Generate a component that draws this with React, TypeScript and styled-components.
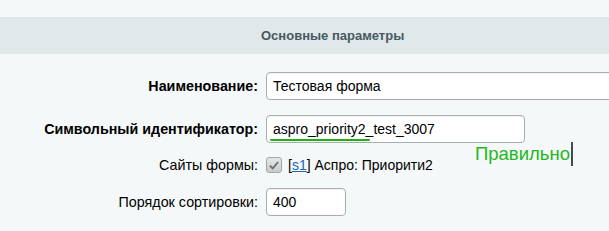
import React from 'react';
import styled, { createGlobalStyle } from 'styled-components';

const GlobalStyle = createGlobalStyle`
  html, body {
    margin: 0;
    padding: 0;
    background: #f5f8f9;
    overflow: hidden;
  }
  body {
    font-family: 'Liberation Sans', Arial, sans-serif;
    font-size: 14px;
    color: #000;
  }
`;

const Page = styled.div`
  width: 609px;
  height: 231px;
  padding-top: 17px;
  box-sizing: border-box;
  overflow: hidden;
`;

const Heading = styled.div`
  height: 37px;
  background: #e0e8ea;
  display: flex;
  align-items: center;
  padding-left: 261px;
`;

const HeadingTitle = styled.h2`
  margin: 0;
  font-size: 13px;
  font-weight: 700;
  color: #465a60;
`;

const Form = styled.div`
  display: flex;
  flex-direction: column;
`;

const Row = styled.div<{ $top: number; $height: number }>`
  display: grid;
  grid-template-columns: 258px 1fr;
  column-gap: 8px;
  align-items: center;
  margin-top: ${(p) => p.$top}px;
  height: ${(p) => p.$height}px;
`;

const Label = styled.label<{ $bold?: boolean }>`
  text-align: right;
  font-size: 14.3px;
  font-weight: ${(p) => (p.$bold ? 700 : 400)};
  white-space: nowrap;
`;

const Field = styled.div<{ $clip?: boolean }>`
  position: relative;
  display: flex;
  align-items: center;
  gap: 6px;
  height: 100%;
  min-width: 0;
  overflow: ${(p) => (p.$clip ? 'hidden' : 'visible')};
`;

const TextInput = styled.input<{ $width: number }>`
  box-sizing: border-box;
  flex: none;
  width: ${(p) => p.$width}px;
  height: 28px;
  padding: 0 6px;
  border: 1px solid #a7aeb1;
  border-radius: 4px;
  background: #fff;
  font-family: 'Liberation Sans', Arial, sans-serif;
  font-size: 14px;
  color: #000;
  outline: none;
  box-shadow: inset 0 1px 1px rgba(0, 0, 0, 0.05);
`;

const Underline = styled.span`
  position: absolute;
  left: 4px;
  top: 24px;
  width: 100px;
  height: 2px;
  border-radius: 1px;
  background: #1eb20f;
`;

const Hint = styled.span`
  position: absolute;
  left: 209px;
  top: 27px;
  height: 24px;
  display: flex;
  align-items: center;
  font-size: 18.5px;
  color: #22b81c;
  &::after {
    content: '';
    display: block;
    width: 2px;
    height: 24px;
    margin-left: 1px;
    background: #4a4a4a;
  }
`;

const Checkbox = styled.span`
  box-sizing: border-box;
  flex: none;
  width: 16px;
  height: 16px;
  border: 1px solid #a3a8aa;
  border-radius: 3px;
  background: linear-gradient(#e4e6e7, #c8cbcc);
  display: flex;
  align-items: center;
  justify-content: center;
`;

const SiteLink = styled.a`
  color: #2067b0;
  text-decoration: underline;
`;

export default function App() {
  return (
    <Page>
      <GlobalStyle />
      <Heading>
        <HeadingTitle>Основные параметры</HeadingTitle>
      </Heading>
      <Form>
        <Row $top={18} $height={28}>
          <Label $bold>Наименование:</Label>
          <Field $clip>
            <TextInput $width={400} defaultValue="Тестовая форма" />
          </Field>
        </Row>
        <Row $top={15} $height={28}>
          <Label $bold>Символьный идентификатор:</Label>
          <Field>
            <TextInput $width={259} defaultValue="aspro_priority2_test_3007" />
            <Underline />
            <Hint>Правильно</Hint>
          </Field>
        </Row>
        <Row $top={14} $height={16}>
          <Label>Сайты формы:</Label>
          <Field>
            <Checkbox>
              <svg width="12" height="11" viewBox="0 0 12 11">
                <path d="M1.8 5.6 L4.7 8.4 L10.2 2" fill="none" stroke="#6b7072" strokeWidth="1.9" />
              </svg>
            </Checkbox>
            <span>
              [<SiteLink href="#">s1</SiteLink>] Аспро: Приорити2
            </span>
          </Field>
        </Row>
        <Row $top={15} $height={28}>
          <Label>Порядок сортировки:</Label>
          <Field>
            <TextInput $width={80} defaultValue="400" />
          </Field>
        </Row>
      </Form>
    </Page>
  );
}
